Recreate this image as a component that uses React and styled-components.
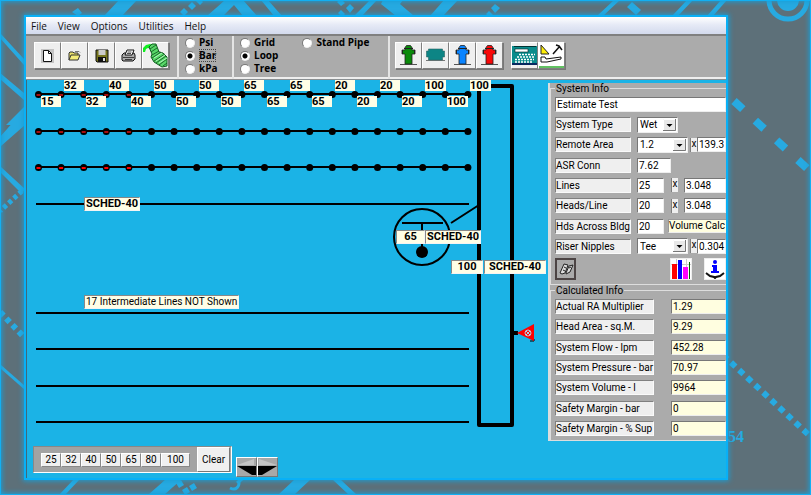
import React, { useState } from "react";
import styled, { createGlobalStyle } from "styled-components";

const GlobalStyle = createGlobalStyle`
  * {
    box-sizing: border-box;
  }
  body {
    margin: 0;
    background: #5d7079;
    font-family: Roboto, sans-serif;
    font-size: 10px;
    color: #000;
  }
  button, input, select {
    font: inherit;
    color: inherit;
    margin: 0;
    padding: 0;
    border-radius: 0;
  }
`;

const Page = styled.div`
  position: relative;
  display: flex;
  min-height: 100vh;
  padding: 14px 82px 14px 23px;
  border: 1px solid #12b0f2;
  background: #5d7079;
  overflow: hidden;
`;
const Backdrop = styled.svg`
  position: absolute;
  top: -1px;
  left: -1px;
`;
const Glow = styled.div`
  position: absolute;
  inset: 0;
  box-shadow: inset 0 0 5px 1px #1a9fd6;
`;
const Window = styled.div`
  position: relative;
  display: flex;
  flex-direction: column;
  flex: 1;
  min-width: 0;
  border: 2px solid #09b0f6;
  box-shadow: 0 0 5px 1px #1a9fd6;
  background: #1bb3e6;
`;

const MenuBar = styled.nav`
  display: flex;
  height: 17px;
  padding-left: 5px;
  gap: 11px;
  align-items: center;
  background: linear-gradient(#fff, #e6eaf6 45%, #d3daed);
`;
const MenuButton = styled.button`
  border: 0;
  background: none;
  line-height: 16px;
  font-family: "Open Sans", sans-serif;
  font-size: 10px;
  color: #111;
`;

const Toolbar = styled.div`
  display: flex;
  height: 46px;
  border-top: 2px solid #808080;
  border-bottom: 1px solid #8a8f92;
  box-shadow: inset 0 -2px 0 #eee;
  background: #ababab;
`;
const ToolGroup = styled.div`
  display: flex;
  width: ${(p) => p.$width};
  padding: 6px 0 0 ${(p) => p.$pad}px;
  border-right: ${(p) => (p.$last ? 0 : 2)}px solid #e4e4e4;
`;
const ToolButton = styled.button`
  display: flex;
  align-items: center;
  justify-content: center;
  width: 27px;
  height: 27px;
  margin-left: ${(p) => (p.$apart ? 8 : 0)}px;
  border: 1px solid;
  border-color: #fff #808080 #808080 #fff;
  box-shadow: 1px 1px 0 #777;
  background: ${(p) => p.$bg || "#efefef"};
`;
const RadioGroup = styled.div`
  display: grid;
  grid-auto-flow: column;
  grid-template-rows: repeat(3, 13px);
  grid-auto-columns: max-content;
  align-content: start;
  column-gap: 24px;
  width: ${(p) => p.$width}px;
  padding: 0 0 0 6px;
  border-right: 2px solid #e4e4e4;
`;
const RadioLabel = styled.label`
  display: flex;
  align-items: center;
  gap: 4px;
  font-family: "Open Sans", sans-serif;
  font-weight: 700;
  font-size: 10px;
  line-height: 13px;
  white-space: nowrap;
  span {
    outline: ${(p) => (p.$focused ? "1px dotted #444" : "none")};
    outline-offset: -1px;
  }
`;
const Radio = styled.input`
  appearance: none;
  width: 10px;
  height: 10px;
  margin: 0;
  border: 1px solid;
  border-color: #777 #eee #eee #777;
  border-radius: 50%;
  background: #fff;
  &:checked {
    background: radial-gradient(#000 2px, #fff 3px);
  }
`;

const Work = styled.main`
  display: flex;
  flex: 1;
  align-items: flex-start;
`;
const Canvas = styled.section`
  position: relative;
  flex: 1;
  align-self: stretch;
  min-width: 521px;
  border-left: 1px solid #3f6a7c;
`;
const Diagram = styled.svg`
  display: block;
`;
const PipeTag = styled.span`
  position: absolute;
  left: ${(p) => p.$x}px;
  top: ${(p) => p.$y}px;
  min-width: 20px;
  height: 11px;
  padding: 0 2px 0 0;
  font: 700 11px/11px Roboto, sans-serif;
  background: #fffee6;
`;
const NoteTag = styled.span`
  position: absolute;
  left: ${(p) => p.$x}px;
  top: ${(p) => p.$y}px;
  min-width: ${(p) => p.$width || 0}px;
  height: 14px;
  padding: 0 1px;
  border: 1px solid;
  border-color: #888 #f4f4f4 #f4f4f4 #888;
  line-height: 12px;
  text-align: center;
  white-space: nowrap;
  background: #fffee6;
  ${(p) => p.$bold && "font: 700 11px/12px Roboto, sans-serif;"}
`;

const BottomBar = styled.div`
  display: flex;
  align-items: flex-end;
  gap: 4px;
  padding-left: 6px;
`;
const Palette = styled.div`
  display: flex;
  align-items: center;
  height: 27px;
  padding: 0 1px 0 7px;
  border: 1px solid;
  border-color: #888 #fff #fff #888;
  background: #a3a3a3;
`;
const SizeButton = styled.button`
  width: ${(p) => (p.$wide ? 29 : 20)}px;
  height: 14px;
  border: 1px solid;
  border-color: #fff #888 #888 #fff;
  background: #f0f0f0;
  line-height: 12px;
`;
const ClearButton = styled.button`
  width: 33px;
  height: 25px;
  margin-left: 7px;
  border: 1px solid;
  border-color: #fff #777 #777 #fff;
  background: #f0f0f0;
  line-height: 22px;
`;
const Spinner = styled.div`
  display: flex;
  margin-bottom: -4px;
`;
const SpinButton = styled.button`
  display: flex;
  width: 21px;
  height: 20px;
  border: 1px solid;
  border-color: #fff #777 #777 #fff;
  background: #a8a8a8;
`;

const Side = styled.aside`
  width: 178px;
  margin-top: 3px;
  overflow: hidden;
  border-left: 2px solid #ddd;
  background: #ababab;
`;
const Group = styled.fieldset`
  min-width: 0;
  margin: 0;
  padding: 3px 0 5px 4px;
  border: solid #ddd;
  border-width: 1px 0 0 1px;
  box-shadow: inset 0 -1px 0 #ddd;
  legend {
    height: 11px;
    padding: 0 1px;
    line-height: 11px;
  }
`;
const Rows = styled.div`
  display: flex;
  flex-direction: column;
  justify-content: space-between;
  height: 137px;
  margin-top: ${(p) => p.$top || 0}px;
`;
const Row = styled.div`
  display: flex;
  align-items: center;
  height: 15px;
`;
const RowLabel = styled.label`
  width: ${(p) => (p.$wide ? 99 : 76)}px;
  height: 15px;
  margin-right: ${(p) => (p.$wide ? 17 : 6)}px;
  flex: none;
  border: 1px solid;
  border-color: #808080 #fafafa #fafafa #808080;
  line-height: 13px;
  white-space: nowrap;
  background: #efefef;
`;
const Field = styled.input`
  flex: ${(p) => (p.$width ? "none" : "1")};
  width: ${(p) => p.$width || 10}px;
  min-width: 0;
  height: 15px;
  padding-left: 1px;
  border: 1px solid;
  border-color: #777 #eee #eee #777;
  background: ${(p) => (p.$cream ? "#fffee0" : "#fff")};
`;
const Times = styled.span`
  flex: none;
  width: 7px;
  height: 14px;
  margin-left: ${(p) => p.$left}px;
  margin-right: ${(p) => p.$right}px;
  border-left: 1px solid #808080;
  line-height: 12px;
  text-align: center;
  background: #efefef;
`;
const SelectBox = styled.span`
  position: relative;
  flex: none;
  width: ${(p) => p.$width}px;
  height: 16px;
  svg {
    position: absolute;
    top: 2px;
    right: 2px;
    pointer-events: none;
  }
`;
const Select = styled.select`
  display: block;
  appearance: none;
  width: 100%;
  height: 16px;
  padding-left: 2px;
  border: 1px solid;
  border-color: #777 #eee #eee #777;
  background: #fff;
`;
const CalcButton = styled.button`
  flex: 1;
  height: 14px;
  margin-left: 4px;
  border: solid;
  border-width: 1px 0 1px 1px;
  border-color: #999 #eee #eee #999;
  text-align: left;
  line-height: 12px;
  white-space: nowrap;
  background: #fffee0;
`;
const IconRow = styled.div`
  display: flex;
  align-items: center;
  margin-top: 4px;
`;
const IconButton = styled.button`
  display: flex;
  align-items: center;
  justify-content: center;
  width: 22px;
  height: 22px;
  margin-left: ${(p) => p.$left || 0}px;
  border: ${(p) => (p.$pressed ? "2px solid #4c4444" : "1px solid #eee")};
  background: ${(p) => (p.$pressed ? "#aaa" : "#fff")};
`;

const RED_HEADS = 5;
const HEAD_XS = Array.from({ length: 20 }, (_, i) => 11.5 + i * 22.6);
const TOP_SIZES = [32, 40, 50, 50, 65, 65, 20, 20, 100, 100];
const BOTTOM_SIZES = [15, 32, 40, 50, 50, 65, 65, 20, 20, 100];
const PALETTE = [25, 32, 40, 50, 65, 80, 100];
const CALCULATED = [
  ["Actual RA Multiplier", "1.29"],
  ["Head Area - sq.M.", "9.29"],
  ["System Flow - lpm", "452.28"],
  ["System Pressure - bar", "70.97"],
  ["System Volume - l", "9964"],
  ["Safety Margin - bar", "0"],
  ["Safety Margin - % Sup", "0"],
];

const BackdropArt = () => (
  <Backdrop width="811" height="495" fill="#27aae1" stroke="none">
    <path d="M119 0h18l-15 16h-18zM207 16l18-16h18l14 16h-14l-9-11-11 11zM261 0h7l14 16h-8zM354 16l16-16h7l-15 16zM383 0h20l-3 4 14 12h-18l-15-12zM430 16l14-16h14l-15 16zM597 16l17-16h6l-17 16zM672 16l15-16h6l-15 16zM707 16l14-16h6l-14 16z" />
    <path d="M632 2l9 8-5 5-9-8zM72 12l6-4 4 5-4 3zM180 12l4-4 4 4-4 4zM188 6l4-4 4 4-4 4zM196 1l3-3 4 4-3 3zM346 8l4-4 4 4-4 5zM338 13l3-3 4 4-3 3zM491 8l4-4 5 4-5 5zM337 2l4-3 4 4-4 3zM486 14l3-3 4 4-3 3z" />
    <circle cx="788" cy="0" r="19" fill="none" stroke="#27aae1" strokeWidth="5" />
    <circle cx="788" cy="0" r="11" />
    <path d="M734 101L811 172" fill="none" stroke="#27aae1" strokeWidth="8" strokeDasharray="12 17" />
    <path d="M723 355L811 437" fill="none" stroke="#27aae1" strokeWidth="6" strokeDasharray="6 5" />
    <path d="M0 33l24 26v6L0 38zM0 73l24 20v7L0 79zM6 125l18-18v18zM0 137l15-17h10v5L0 147zM0 166l25 23-3 5-22-22z" />
    <path d="M22 191L0 211" fill="none" stroke="#27aae1" strokeWidth="5" strokeDasharray="4 3" />
    <path d="M0 312L24 337" fill="none" stroke="#27aae1" strokeWidth="6" strokeDasharray="5 4" />
    <path d="M0 364l25 22v4L0 368z" />
    <path d="M59 495l15-16h6l-15 16zM148 495l18-16h16l-18 16zM278 495l17-16h16l-17 16zM332 479h8l17 16h-8z" />
    <path d="M176 483l5-3 3 5-5 3zM182 490l5-3 3 5-5 3zM189 486l5-3 3 5-5 3z" />
    <path d="M230 488c6 3 10-1 9-9M237 483l5-4" fill="none" stroke="#27aae1" strokeWidth="3" />
    <text x="728" y="442" fontFamily="Liberation Serif, serif" fontWeight="700" fontSize="16">
      54
    </text>
  </Backdrop>
);

const Hydrant = ({ color }) => (
  <svg width="25" height="25" viewBox="0 0 25 25">
    <path d="M4 21.500h17" stroke="#555" />
    <path
      d="M9 21V11H6V7h3V4.500l1.500-2h4L16 4.500V7h3v4h-3v10z"
      fill={color}
      stroke="#222"
      strokeWidth=".8"
    />
    <path d="M8 5.500h9M6.500 7v4M18.500 7v4" stroke="#222" />
  </svg>
);

const Arrow = () => (
  <svg width="13" height="12">
    <rect width="13" height="12" fill="#e8e8e8" />
    <path d="M.5 12V.5H13" fill="none" stroke="#fff" />
    <path d="M0 11.500h12.500V0" fill="none" stroke="#777" />
    <path d="M3.500 5h6l-3 3z" fill="#000" />
  </svg>
);

const DropDown = ({ id, width, options }) => (
  <SelectBox $width={width}>
    <Select id={id} defaultValue={options[0]}>
      {options.map((o) => (
        <option key={o}>{o}</option>
      ))}
    </Select>
    <Arrow />
  </SelectBox>
);

const Choice = ({ name, value, current, onPick, focused }) => (
  <RadioLabel $focused={focused}>
    <Radio
      type="radio"
      name={name}
      checked={current === value}
      onChange={() => onPick(value)}
    />
    <span>{value}</span>
  </RadioLabel>
);

const FileTools = () => (
  <ToolGroup $width="153px" $pad={8}>
    <ToolButton aria-label="New">
      <svg width="13" height="14" viewBox="0 0 13 14">
        <rect width="13" height="14" fill="#c4c4c4" />
        <path d="M2.500 1.500h5l3 3v8h-8z" fill="#fff" stroke="#111" />
        <path d="M7.500 1.500v3h3" fill="none" stroke="#111" />
      </svg>
    </ToolButton>
    <ToolButton aria-label="Open">
      <svg width="13" height="12" viewBox="0 0 13 12">
        <path d="M1 10V3l1-1h3l1 1h4v2" fill="#e9e06a" stroke="#333" />
        <path d="M1 10l2-5h9l-2 5z" fill="#f5ed78" stroke="#333" />
        <path d="M7 1.500h4l1 1" fill="none" stroke="#777" />
      </svg>
    </ToolButton>
    <ToolButton aria-label="Save">
      <svg width="14" height="14" viewBox="0 0 14 14">
        <path d="M1 1h12v12H2l-1-1z" fill="#75751f" stroke="#111" />
        <rect x="3.500" y="1" width="7" height="5" fill="#ccc" />
        <rect x="3" y="8" width="8" height="5" fill="#111" />
        <rect x="8" y="9" width="2" height="3" fill="#ddd" />
      </svg>
    </ToolButton>
    <ToolButton aria-label="Print">
      <svg width="15" height="14" viewBox="0 0 15 14">
        <path d="M1 6l2-2h10l1 2v4l-2 2H2l-1-1z" fill="#aaa" stroke="#111" />
        <path d="M4 6l2-5h7l-2 5z" fill="#fff" stroke="#111" />
        <path d="M6.500 3h4M6 4.500h4M2 8.500h11M4 10.500h7" stroke="#222" strokeWidth=".8" />
      </svg>
    </ToolButton>
    <ToolButton aria-label="Flow">
      <svg width="25" height="25" viewBox="0 0 25 25">
        <path d="M0 9V5l3-3 4-1 3 1-2 4-3-1-2 1-1 3z" fill="#10ee20" />
        <path
          d="M6 4l3-3h4l3 8 4 1 4 4v9l-5 1-8-5-3-5 1-3z"
          fill="#58d868"
          stroke="#145c22"
        />
        <path
          d="M7 6l6-4M8 9l6-4M9 12l7-4M9 15l9-6M11 18l11-7M13 20l10-7M16 22l8-6M20 23l4-3"
          stroke="#145c22"
          strokeWidth=".9"
        />
        <path d="M11 15l8-5M13 18l9-6M16 20l8-5" stroke="#c5ffcb" strokeWidth=".8" />
      </svg>
    </ToolButton>
  </ToolGroup>
);

const DeviceTools = () => (
  <ToolGroup $width="auto" $pad={5} $last>
    <ToolButton aria-label="Green hydrant">
      <Hydrant color="#0a8a0a" />
    </ToolButton>
    <ToolButton aria-label="Tank">
      <svg width="25" height="25" viewBox="0 0 25 25">
        <path d="M3 17.500h19" stroke="#777" />
        <path
          d="M5.500 6h14v2h2v6h-2v3h-14v-3h-2V8h2z"
          fill="#0d8585"
          stroke="#2b6464"
          strokeWidth=".6"
        />
      </svg>
    </ToolButton>
    <ToolButton aria-label="Blue hydrant">
      <Hydrant color="#0a84ff" />
    </ToolButton>
    <ToolButton aria-label="Red hydrant">
      <Hydrant color="#f80808" />
    </ToolButton>
    <ToolButton aria-label="Calculate" $apart>
      <svg width="25" height="25" viewBox="0 0 25 25">
        <rect y="3" width="25" height="18" fill="#0a8c8c" />
        <rect y="20" width="25" height="2" fill="#06285f" />
        <path d="M2 3.500h22" stroke="#033" />
        <rect x="3" y="6" width="13" height="3" fill="#fff" stroke="#022" strokeWidth=".6" />
        <path
          d="M7 11.500h16M5 14h17M3 16.500h19M3 19h18"
          stroke="#fff"
          strokeWidth="1.500"
          strokeDasharray="2 1"
        />
      </svg>
    </ToolButton>
    <ToolButton aria-label="Design tools" $bg="#fff">
      <svg width="25" height="25" viewBox="0 0 25 25">
        <path d="M2 2l8 9H2z" fill="#ffee08" stroke="#222" />
        <path d="M14 11l7-8M17 2l3 1 3 4" fill="none" stroke="#111" strokeWidth="1.500" />
        <path d="M2 14h4l1 2 15-2v2l-14 3H2z" fill="#fff" stroke="#111" />
        <path d="M0 24h25" stroke="#62c162" strokeWidth="2" />
      </svg>
    </ToolButton>
  </ToolGroup>
);

const Piping = () => (
  <Diagram width="521" height="366" viewBox="0 0 521 366" stroke="#000" fill="none">
    {[14, 51, 87].map((y) => (
      <g key={y}>
        <path d={`M9 ${y}H441`} strokeWidth="2" />
        {HEAD_XS.map((x, i) => (
          <g key={x} stroke="none">
            <circle cx={x} cy={y + 0.5} r="3.500" fill="#000" />
            {i < RED_HEADS && (
              <rect x={x - 2} y={y} width="4" height="2" fill={y > 80 ? "#f00" : "#a80d0d"} />
            )}
          </g>
        ))}
      </g>
    ))}
    <path d="M9 124H442M9 233H442M9 269H442M9 306H442M9 342H442" strokeWidth="2" />
    <rect x="452" y="6" width="33" height="339" strokeWidth="4" strokeLinejoin="round" />
    <circle cx="395" cy="157" r="28" strokeWidth="2" />
    <path d="M375 143h41M395 143v25M424 143l28-18" strokeWidth="2" />
    <circle cx="395" cy="172" r="6" fill="#000" stroke="none" />
    <path d="M486 253h5" strokeWidth="4" />
    <path d="M507 259v2h-4" />
    <path d="M490 253l17-9v17z" fill="#f00" stroke="none" />
    <circle cx="501" cy="253" r="3" stroke="#bcd" />
    <path d="M499 251l4 4M503 251l-4 4" stroke="#bcd" />
  </Diagram>
);

const SystemInfo = () => (
  <Group>
    <legend>System Info</legend>
    <Row>
      <Field aria-label="System name" defaultValue="Estimate Test" />
    </Row>
    <Rows $top={5}>
      <Row>
        <RowLabel htmlFor="type">System Type</RowLabel>
        <DropDown id="type" width={41} options={["Wet", "Dry"]} />
      </Row>
      <Row>
        <RowLabel htmlFor="area">Remote Area</RowLabel>
        <DropDown id="area" width={51} options={["1.2", "1.4"]} />
        <Times $left={2} $right={0}>
          x
        </Times>
        <Field aria-label="Remote area size" defaultValue="139.3" />
      </Row>
      <Row>
        <RowLabel htmlFor="asr">ASR Conn</RowLabel>
        <Field id="asr" $width={34} defaultValue="7.62" />
      </Row>
      <Row>
        <RowLabel htmlFor="lines">Lines</RowLabel>
        <Field id="lines" $width={27} defaultValue="25" />
        <Times $left={7} $right={6}>
          x
        </Times>
        <Field aria-label="Line spacing" defaultValue="3.048" />
      </Row>
      <Row>
        <RowLabel htmlFor="heads">Heads/Line</RowLabel>
        <Field id="heads" $width={27} defaultValue="20" />
        <Times $left={7} $right={6}>
          x
        </Times>
        <Field aria-label="Head spacing" defaultValue="3.048" />
      </Row>
      <Row>
        <RowLabel htmlFor="across">Hds Across Bldg</RowLabel>
        <Field id="across" $width={27} defaultValue="20" />
        <CalcButton>Volume Calc</CalcButton>
      </Row>
      <Row>
        <RowLabel htmlFor="riser">Riser Nipples</RowLabel>
        <DropDown id="riser" width={51} options={["Tee", "Elbow"]} />
        <Times $left={2} $right={0}>
          x
        </Times>
        <Field aria-label="Riser length" defaultValue="0.304" />
      </Row>
    </Rows>
    <IconRow>
      <IconButton $pressed aria-label="Notes">
        <svg width="16" height="14" viewBox="0 0 16 14" fill="#ddd" stroke="#222">
          <path d="M2 11l4-9 4 1-3 8-3 1zM8 11l3-7 4-1-3 7-4 2z" />
          <path d="M6 5l2 1M5 8l2 1M11 6l2-1" fill="none" />
        </svg>
      </IconButton>
      <IconButton $left={94} aria-label="Graph">
        <svg width="20" height="20">
          <path d="M0 5.500h20M5.500 0v20M15.500 0v20" stroke="#ccc" />
          <rect x="1" y="5" width="5" height="15" fill="#f00" />
          <rect x="7" y="1" width="4" height="19" fill="#00f" />
          <rect x="12" y="8" width="5" height="12" fill="#f0f" />
          <rect x="18" y="3" width="1" height="17" fill="#060" />
        </svg>
      </IconButton>
      <IconButton $left={12} aria-label="About">
        <svg width="20" height="20">
          <circle cx="10" cy="3" r="2" fill="#00f" />
          <path d="M7 6h5v6h2v2H6v-2h2V8H7z" fill="#00f" />
          <path d="M1 14l4 3 4 1 1 1 1-1 4-1 4-3" fill="none" stroke="#111" strokeWidth="2" />
        </svg>
      </IconButton>
    </IconRow>
  </Group>
);

const CalculatedInfo = () => (
  <Group>
    <legend>Calculated Info</legend>
    <Rows>
      {CALCULATED.map(([label, value]) => (
        <Row key={label}>
          <RowLabel htmlFor={label} $wide>
            {label}
          </RowLabel>
          <Field id={label} $cream readOnly value={value} />
        </Row>
      ))}
    </Rows>
  </Group>
);

export default function App() {
  const [unit, setUnit] = useState("Bar");
  const [layout, setLayout] = useState("Loop");
  return (
    <Page>
      <GlobalStyle />
      <BackdropArt />
      <Glow />
      <Window>
        <MenuBar>
          {["File", "View", "Options", "Utilities", "Help"].map((m) => (
            <MenuButton key={m}>{m}</MenuButton>
          ))}
        </MenuBar>
        <Toolbar>
          <FileTools />
          <RadioGroup $width={55}>
            {["Psi", "Bar", "kPa"].map((u) => (
              <Choice
                key={u}
                name="unit"
                value={u}
                current={unit}
                onPick={setUnit}
                focused={u === "Bar"}
              />
            ))}
          </RadioGroup>
          <RadioGroup $width={156}>
            {["Grid", "Loop", "Tree", "Stand Pipe"].map((l) => (
              <Choice key={l} name="layout" value={l} current={layout} onPick={setLayout} />
            ))}
          </RadioGroup>
          <DeviceTools />
        </Toolbar>
        <Work>
          <Canvas>
            <Piping />
            {TOP_SIZES.map((size, i) => (
              <PipeTag key={i} $x={37 + Math.round(i * 45.1)} $y={0}>
                {size}
              </PipeTag>
            ))}
            {BOTTOM_SIZES.map((size, i) => (
              <PipeTag key={i} $x={14 + Math.round(i * 45.1)} $y={16}>
                {size}
              </PipeTag>
            ))}
            <NoteTag $bold $x={57} $y={117}>
              SCHED-40
            </NoteTag>
            <NoteTag $x={57} $y={215}>
              17 Intermediate Lines NOT Shown
            </NoteTag>
            <NoteTag $bold $x={369} $y={150} $width={29}>
              65
            </NoteTag>
            <NoteTag $bold $x={398} $y={150}>
              SCHED-40
            </NoteTag>
            <NoteTag $bold $x={424} $y={180} $width={32}>
              100
            </NoteTag>
            <NoteTag $bold $x={457} $y={180} $width={62}>
              SCHED-40
            </NoteTag>
            <BottomBar>
              <Palette>
                {PALETTE.map((size) => (
                  <SizeButton key={size} $wide={size === 100}>
                    {size}
                  </SizeButton>
                ))}
                <ClearButton>Clear</ClearButton>
              </Palette>
              <Spinner>
                <SpinButton aria-label="Previous">
                  <svg width="19" height="18">
                    <path d="M0 7L17 1v6z" fill="#c4c4c4" />
                    <path d="M0 8h19v9h-4z" fill="#000" />
                  </svg>
                </SpinButton>
                <SpinButton aria-label="Next">
                  <svg width="19" height="18">
                    <path d="M19 7L1 1v6z" fill="#c4c4c4" />
                    <path d="M19 8H0v9h4z" fill="#000" />
                  </svg>
                </SpinButton>
              </Spinner>
            </BottomBar>
          </Canvas>
          <Side>
            <SystemInfo />
            <CalculatedInfo />
          </Side>
        </Work>
      </Window>
    </Page>
  );
}
